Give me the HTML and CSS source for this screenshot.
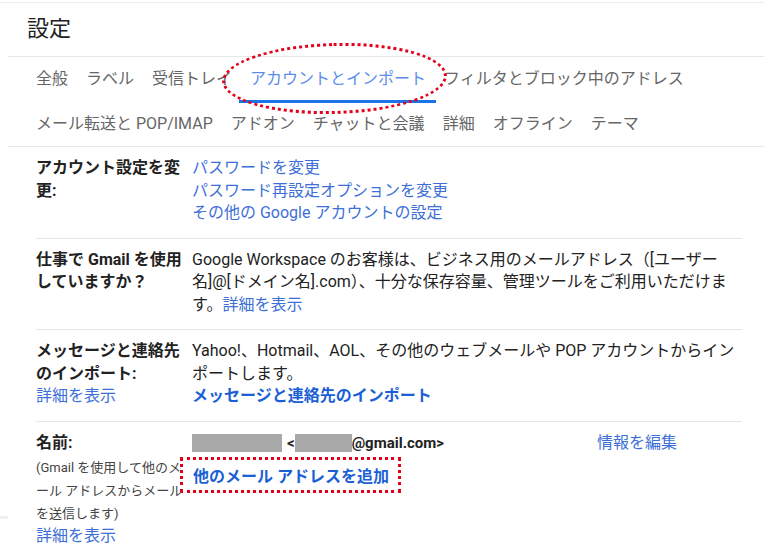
FILE: index.html
```html
<!DOCTYPE html>
<html lang="ja">
<head>
    <meta charset="UTF-8">
    <meta name="viewport" content="width=device-width, initial-scale=1.0">
    <title>設定</title>
    <link rel="stylesheet" href="styles.css">
</head>
<body>
    <div class="page">
        <!-- Cabecera -->
        <div class="header">
            <h1 class="title">設定</h1>
        </div>

        <!-- Pestañas -->
        <div class="tabs">
            <div class="tab-row">
                <span class="tab">全般</span>
                <span class="tab">ラベル</span>
                <span class="tab">受信トレイ</span>
                <span class="tab tab-active">アカウントとインポート</span>
                <span class="tab">フィルタとブロック中のアドレス</span>
            </div>
            <div class="tab-row">
                <span class="tab">メール転送と POP/IMAP</span>
                <span class="tab">アドオン</span>
                <span class="tab">チャットと会議</span>
                <span class="tab">詳細</span>
                <span class="tab">オフライン</span>
                <span class="tab">テーマ</span>
            </div>
            <div class="mark-ellipse"></div>
        </div>

        <!-- Secciones -->
        <div class="section">
            <div class="label">アカウント設定を変更:</div>
            <div class="value">
                <a class="link" href="#">パスワードを変更</a><br>
                <a class="link" href="#">パスワード再設定オプションを変更</a><br>
                <a class="link" href="#">その他の Google アカウントの設定</a>
            </div>
        </div>

        <div class="section">
            <div class="label">仕事で Gmail を使用していますか？</div>
            <div class="value nowrap">
                Google Workspace のお客様は、ビジネス用のメールアドレス（[ユーザー<br>名]@[ドメイン名].com）、十分な保存容量、管理ツールをご利用いただけま<br>す。<a class="link" href="#">詳細を表示</a>
            </div>
        </div>

        <div class="section">
            <div class="label">
                メッセージと連絡先のインポート:<br>
                <a class="link link-normal" href="#">詳細を表示</a>
            </div>
            <div class="value nowrap">
                Yahoo!、Hotmail、AOL、その他のウェブメールや POP アカウントからイン<br>ポートします。<br>
                <a class="link link-bold" href="#">メッセージと連絡先のインポート</a>
            </div>
        </div>

        <div class="section section-last">
            <div class="label">
                名前:
                <div class="note">(Gmail を使用して他のメ<br>ール アドレスからメール<br>を送信します)</div>
                <a class="link link-normal" href="#">詳細を表示</a>
            </div>
            <div class="value">
                <div class="name-row">
                    <div class="address">
                        <span class="redact redact-name"></span>
                        <span class="addr-text">&lt;</span><span class="redact redact-user"></span><span class="addr-text">@gmail.com&gt;</span>
                    </div>
                    <a class="link" href="#">情報を編集</a>
                </div>
                <div class="add-row">
                    <a class="link link-bold" href="#">他のメール アドレスを追加</a>
                    <div class="mark-box"></div>
                </div>
            </div>
        </div>
        <div class="edge-mark"></div>
    </div>
</body>
</html>
```

FILE: styles.css
```css
/* Estilos base */
body {
    margin: 0;
    font-family: Roboto, "Noto Sans CJK JP", sans-serif;
    color: #222;
    background-color: #fff;
}

.page {
    position: relative;
    width: 764px;
    height: 554px;
    overflow: hidden;
    border-top: 1px solid #ececec;
    margin-top: 2px;
    box-sizing: border-box;
}

/* Cabecera */
.header {
    margin-left: 8px;
    height: 53px;
    border-bottom: 1px solid #e8e8e8;
}

.title {
    margin: 0;
    padding: 11px 0 0 19px;
    font-size: 22px;
    font-weight: 400;
    line-height: 30px;
    color: #222;
}

/* Pestañas */
.tabs {
    position: relative;
    margin-left: 8px;
    padding-left: 19px;
    border-bottom: 1px solid #e8e8e8;
}

.tab-row {
    display: flex;
    height: 44px;
    align-items: center;
}

.tab-row + .tab-row {
    height: 45px;
}

.tab {
    position: relative;
    padding: 0 9px;
    font-size: 16px;
    color: #666;
    white-space: nowrap;
    line-height: 22px;
}

.tab-active {
    color: #5b8cec;
}

.tab-active::after {
    content: "";
    position: absolute;
    left: -2px;
    right: -1px;
    bottom: -13px;
    height: 3px;
    background-color: #1a73e8;
}

/* Marca roja (elipse) */
.mark-ellipse {
    position: absolute;
    left: 214px;
    top: -14px;
    width: 219px;
    height: 65px;
    border: 3px dotted #e3001b;
    border-radius: 50%;
    transform: rotate(-1.5deg);
}

/* Secciones */
.section {
    display: grid;
    grid-template-columns: 148px 1fr;
    column-gap: 8px;
    margin-left: 36px;
    width: 706px;
    padding: 10px 0 13px;
    border-bottom: 1px solid #e5e5e5;
    font-size: 16px;
    line-height: 22.5px;
}

.section-last {
    border-bottom: none;
}

.label {
    font-weight: 700;
    color: #222;
}

.value {
    color: #222;
}

.nowrap {
    white-space: nowrap;
}

.link {
    color: #3d6fd8;
    text-decoration: none;
    font-weight: 400;
}

.link-normal {
    font-weight: 400;
}

.link-bold {
    font-weight: 700;
    color: #1b5fd6;
}

/* Nombre y direcciones */
.note {
    margin-top: 2px;
    white-space: nowrap;
    font-size: 13px;
    line-height: 23px;
    font-weight: 400;
    color: #444;
}

.name-row {
    display: flex;
    align-items: center;
}

.address {
    width: 405px;
    display: flex;
    align-items: center;
}

.redact {
    display: inline-block;
    height: 18px;
    background-color: #a9a9a9;
}

.redact-name {
    width: 90px;
    margin-right: 5px;
}

.redact-user {
    width: 57px;
}

.addr-text {
    font-size: 15px;
    font-weight: 700;
    color: #222;
}

.add-row {
    position: relative;
    margin-top: 12px;
    padding-left: 1px;
}

/* Marca roja (rectángulo) */
.mark-box {
    position: absolute;
    left: -12px;
    top: -9px;
    width: 221px;
    height: 36px;
    border: 3px dotted #e3001b;
    box-sizing: border-box;
}

/* Borde gris a la izquierda */
.edge-mark {
    position: absolute;
    left: 0;
    top: 513px;
    width: 8px;
    height: 3px;
    background-color: #f0f0f0;
}
```
